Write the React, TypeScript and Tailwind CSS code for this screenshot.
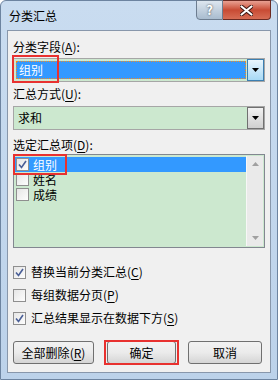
import React from "react";

const font = { fontFamily: '"Noto Sans CJK SC", "Microsoft YaHei", sans-serif' };

function Key({ k }: { k: string }) {
  return (
    <>
      (<span className="underline underline-offset-2">{k}</span>)
    </>
  );
}

function DropArrow({ focused }: { focused?: boolean }) {
  return (
    <div
      className={
        focused
          ? "w-[17px] h-full flex items-center justify-center border border-[#3c7fb1] bg-gradient-to-b from-[#eaf6fd] to-[#a7d9f5]"
          : "w-[17px] h-full flex items-center justify-center border border-[#707070] bg-gradient-to-b from-[#f2f2f2] to-[#cfcfcf]"
      }
    >
      <svg width="7" height="4" viewBox="0 0 7 4">
        <path d="M0 0H7L3.5 4Z" fill="#000" />
      </svg>
    </div>
  );
}

function Check({ checked }: { checked?: boolean }) {
  return (
    <div className="w-[13px] h-[13px] shrink-0 border border-[#8f8f8f] bg-gradient-to-br from-[#e6e6e6] to-[#fdfdfd] flex items-center justify-center">
      {checked && (
        <svg width="9" height="9" viewBox="0 0 9 9">
          <path d="M1 4.5L3.5 7.5L8 1" stroke="#4a5f97" strokeWidth="1.6" fill="none" />
        </svg>
      )}
    </div>
  );
}

function Btn({ children }: { children: React.ReactNode }) {
  return (
    <div className="h-[23px] flex items-center justify-center border border-[#707070] rounded-[3px] bg-gradient-to-b from-[#f2f2f2] via-[#ebebeb] to-[#d5d5d5] text-[12px] text-black">
      {children}
    </div>
  );
}

export default function App() {
  return (
    <div
      className="w-[278px] h-[380px] flex flex-col bg-gradient-to-b from-[#c9dcf0] to-[#bcd2ea] border border-[#6d84a0] rounded-t-[6px]"
      style={font}
    >
      {/* title bar */}
      <div className="h-[29px] flex justify-between">
        <div className="pl-[8px] pt-[7px] text-[12px] leading-[16px] text-black">分类汇总</div>
        <div className="flex h-[20px] mr-[6px] -mt-px">
          <div className="w-[27px] flex items-center justify-center border border-[#6d7d90] rounded-bl-[4px] bg-gradient-to-b from-[#dde6ef] to-[#a9bccf] text-white font-bold text-[13px] [text-shadow:0_0_2px_#333]">
            ?
          </div>
          <div className="w-[48px] flex items-center justify-center border border-l-0 border-[#6b2a22] rounded-br-[4px] bg-gradient-to-b from-[#e8a092] via-[#c84b34] to-[#d66d55]">
            <svg width="13" height="11" viewBox="0 0 13 11">
              <path d="M1.5 1.5L11.5 9.5M11.5 1.5L1.5 9.5" stroke="#3a1510" strokeWidth="4" strokeLinecap="round" />
              <path d="M1.5 1.5L11.5 9.5M11.5 1.5L1.5 9.5" stroke="#fff" strokeWidth="2.2" strokeLinecap="round" />
            </svg>
          </div>
        </div>
      </div>

      {/* client area */}
      <div className="flex-1 mx-[6px] mb-[6px] bg-[#f0f0f0] border border-[#8897ab] px-[5px] pt-[8px] flex flex-col text-[12px] text-black relative">
        <div className="leading-[16px]">
          分类字段<Key k="A" />:
        </div>
        <div className="mt-[3px] h-[24px] flex border border-[#a6a6a6] bg-[#cce8cf] p-[2px] pr-0 relative">
          <div className="flex-1 bg-[#3399ff] border border-dotted border-[#f08a24] text-white pl-[2px] leading-[16px] mr-[1px]">
            组别
          </div>
          <div className="-my-[2px]">
            <DropArrow focused />
          </div>
          <div className="absolute -left-[2px] -top-[4px] w-[47px] h-[28px] border-2 border-[#e8312f]" />
        </div>

        <div className="mt-[4px] leading-[16px]">
          汇总方式<Key k="U" />:
        </div>
        <div className="mt-[4px] h-[24px] flex border border-[#a6a6a6] bg-[#cce8cf]">
          <div className="flex-1 pl-[4px] leading-[22px]">求和</div>
          <DropArrow />
        </div>

        <div className="mt-[7px] leading-[16px]">
          选定汇总项<Key k="D" />:
        </div>
        <div className="mt-[1px] h-[94px] flex border border-[#828790] bg-[#cce8cf] p-[1px]">
          <div className="flex-1 flex flex-col pt-px relative">
            <div className="h-[15px] flex items-center gap-[4px] bg-[#3399ff] text-white pl-[1px]">
              <Check checked />
              <span className="leading-[13px]">组别</span>
            </div>
            <div className="h-[15px] flex items-center gap-[4px] pl-[1px]">
              <Check />
              <span className="leading-[13px]">姓名</span>
            </div>
            <div className="h-[15px] flex items-center gap-[4px] pl-[1px]">
              <Check />
              <span className="leading-[13px]">成绩</span>
            </div>
            <div className="absolute -left-[2px] -top-[2px] w-[54px] h-[21px] border-2 border-[#e8312f]" />
          </div>
          <div className="w-[17px] bg-[#eaeaea] border-l border-[#f7f7f7] flex flex-col items-center justify-between py-[6px]">
            <svg width="7" height="4" viewBox="0 0 7 4">
              <path d="M0 4H7L3.5 0Z" fill="#a0a0a0" />
            </svg>
            <svg width="7" height="4" viewBox="0 0 7 4">
              <path d="M0 0H7L3.5 4Z" fill="#a0a0a0" />
            </svg>
          </div>
        </div>

        <div className="mt-[17px] flex flex-col gap-[9px]">
          <div className="flex items-center gap-[5px] h-[14px]">
            <Check checked />
            <span className="leading-[14px]">
              替换当前分类汇总<Key k="C" />
            </span>
          </div>
          <div className="flex items-center gap-[5px] h-[14px]">
            <Check />
            <span className="leading-[14px]">
              每组数据分页<Key k="P" />
            </span>
          </div>
          <div className="flex items-center gap-[5px] h-[14px]">
            <Check checked />
            <span className="leading-[14px]">
              汇总结果显示在数据下方<Key k="S" />
            </span>
          </div>
        </div>

        <div className="mt-[16px] flex">
          <div className="w-[81px]">
            <Btn>
              全部删除<Key k="R" />
            </Btn>
          </div>
          <div className="w-[69px] ml-[13px] relative">
            <Btn>确定</Btn>
            <div className="absolute -left-[3px] -top-[1px] w-[75px] h-[25px] border-2 border-[#e8312f]" />
          </div>
          <div className="w-[74px] ml-[12px]">
            <Btn>取消</Btn>
          </div>
        </div>
      </div>
    </div>
  );
}
